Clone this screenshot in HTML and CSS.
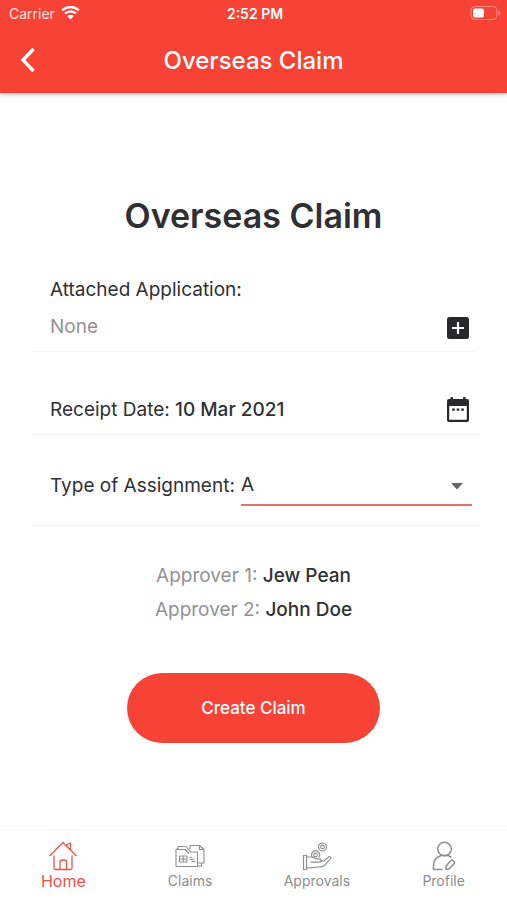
FILE: index.html
```html
<!DOCTYPE html>
<html lang="en">
<head>
<meta charset="utf-8">
<meta name="viewport" content="width=device-width, initial-scale=1">
<title>Overseas Claim</title>
<link rel="stylesheet" href="styles.css">
</head>
<body>
<header class="top">
  <div class="status">
    <span class="carrier">Carrier
      <svg width="19" height="15" viewBox="0 0 19 15" fill="none" stroke="#fff" stroke-width="2.4" aria-hidden="true"><path d="M1.2 4.300a12 12 0 0 1 16.600 0M4.100 7.500a7.800 7.800 0 0 1 10.800 0"/><path d="M6.300 10.100a4.600 4.600 0 0 1 6.400 0L9.500 13.400z" fill="#fff" stroke="none"/></svg>
    </span>
    <span class="time">2:52 PM</span>
    <span class="battery">
      <svg width="31" height="15" viewBox="0 0 31 15" aria-hidden="true"><rect x="1" y=".5" width="26" height="13" rx="4" fill="none" stroke="#fff" stroke-opacity=".4"/><rect x="3" y="2.500" width="11" height="9" rx="2" fill="#fff"/><path d="M28.500 4.500q2 1 2 2.500t-2 2.500z" fill="#fff" fill-opacity=".4"/></svg>
    </span>
  </div>
  <div class="bar">
    <button class="icon-button back" type="button" aria-label="Back">
      <svg width="16" height="26" viewBox="0 0 16 26" fill="none" stroke="#fff" stroke-width="3.400" aria-hidden="true"><path d="M13.500 2 3 13l10.500 11"/></svg>
    </button>
    <span class="bar-title">Overseas Claim</span>
  </div>
</header>

<main class="content">
  <h1>Overseas Claim</h1>
  <form class="form">
    <section class="row attachment">
      <div>
        <p class="label">Attached Application:</p>
        <p class="empty">None</p>
      </div>
      <button class="icon-button" type="button" aria-label="Attach application">
        <svg width="24" height="24" viewBox="0 0 24 24" aria-hidden="true"><rect x="1" y="1" width="22" height="22" rx="2.500" fill="#29292b"/><path d="M12 6v12M6 12h12" stroke="#fff" stroke-width="2.200"/></svg>
      </button>
    </section>
    <section class="row date">
      <p class="label">Receipt Date: <strong>10 Mar 2021</strong></p>
      <button class="icon-button" type="button" aria-label="Choose receipt date">
        <svg width="24" height="26" viewBox="0 0 24 26" aria-hidden="true"><path fill="#29292b" fill-rule="evenodd" d="M4.500 0h2.400v2h10.200V0h2.400v2H21q2 0 2 2v19q0 2-2 2H3q-2 0-2-2V4q0-2 2-2h1.500zM3.200 9v13.800h17.600V9z"/><path d="M6.200 12.700h2.600M10.700 12.700h2.600M15.200 12.700h2.600" stroke="#29292b" stroke-width="2.200"/></svg>
      </button>
    </section>
    <section class="row assignment">
      <label class="label" for="type">Type of Assignment:</label>
      <div class="select">
        <select id="type"><option>A</option><option>B</option></select>
        <svg width="14" height="7" viewBox="0 0 14 7" aria-hidden="true"><path d="M1 0h12L7 6.500z" fill="#666"/></svg>
      </div>
    </section>
    <div class="approvers">
      <p>Approver 1: <strong>Jew Pean</strong></p>
      <p>Approver 2: <strong>John Doe</strong></p>
    </div>
    <button class="submit" type="button">Create Claim</button>
  </form>
</main>

<nav class="tabs">
  <a class="tab active" href="#home">
    <svg width="30" height="30" viewBox="0 0 30 30" fill="none" stroke="currentColor" stroke-width="1.300" stroke-linejoin="round" stroke-linecap="round" aria-hidden="true"><path d="M2 14.500 15 1.500l13 13M6 15v12q0 1.500 1.500 1.500h15q1.500 0 1.500-1.500V15M12 28v-7q0-2 2-2h2.500q2 0 2 2v7M18.800 5.200V3.500L22.500 2v6.800"/></svg>
    <span>Home</span>
  </a>
  <a class="tab" href="#claims">
    <svg width="30" height="30" viewBox="0 0 30 30" fill="none" stroke="currentColor" stroke-width="1.100" stroke-linejoin="round" aria-hidden="true"><path d="M1 25.500V8.500l2-1V5.500h8l4.500 5.500h7v14.500zM2 8.500h8l4 4M15 8.500v-4h9.500l4.500 4V22h-6M24.500 4.500v4H29M23 25h3.500v-3"/><path d="M4.500 15h7.500v6H4.500zM4.500 18h7.500M8.200 15v6M14.500 16.500h3M14.500 18.500h5M16.500 20.500h4" stroke-width="1"/></svg>
    <span>Claims</span>
  </a>
  <a class="tab" href="#approvals">
    <svg width="30" height="30" viewBox="0 0 30 30" fill="none" stroke="currentColor" stroke-width="1.200" stroke-linejoin="round" stroke-linecap="round" aria-hidden="true"><path d="M1.500 14.500h3v14h-3zM4.500 16h5.500q2 0 4 1.800h3q2 0 2 1.700t-2 1.700H9M18.800 20.500l3.200-.7 5-4q1.500-.6 1.800.8-.5 2-6.300 7.600-2.500 1.800-5 1.800l-8 .7-5 .3"/><circle cx="20.500" cy="6" r="4"/><circle cx="20.500" cy="6" r="1.800"/><path d="M10.200 16a4 4 0 1 1 6.800 0"/><circle cx="13.500" cy="14" r="1.800"/></svg>
    <span>Approvals</span>
  </a>
  <a class="tab" href="#profile">
    <svg width="30" height="30" viewBox="0 0 30 30" fill="none" stroke="currentColor" stroke-width="1.500" stroke-linejoin="round" stroke-linecap="round" aria-hidden="true"><circle cx="15.500" cy="8" r="6.800"/><path d="M12 14.500q-7.500 2.500-7.500 10.500v3.500H13M12 14.500h7l3 1.500M17 25l5-5.500q1-1 2 0l1.200 1.200q1 1 0 2L20 28l-3 .5z"/></svg>
    <span>Profile</span>
  </a>
</nav>
</body>
</html>
```

FILE: styles.css
```css
* {
  box-sizing: border-box;
}

body {
  margin: 0;
  min-height: 100vh;
  display: flex;
  flex-direction: column;
  background: #fff;
  color: #303032;
  font-family: Inter, "Liberation Sans", sans-serif;
}

h1,
p {
  margin: 0;
}

button {
  border: 0;
  font: inherit;
  cursor: pointer;
}

svg {
  display: block;
}

.top {
  background: #f64336;
  color: #fff;
  box-shadow: 0 1px 5px rgba(0, 0, 0, 0.3);
}

.status {
  display: grid;
  grid-template-columns: 1fr auto 1fr;
  align-items: center;
  height: 27px;
  padding: 0 6px 0 9px;
  font-size: 14px;
}

.carrier {
  display: flex;
  align-items: center;
  gap: 6px;
  color: #ffe3e0;
}

.time {
  font-weight: 600;
}

.battery {
  justify-self: end;
}

.bar {
  display: grid;
  grid-template-columns: 56px 1fr 56px;
  align-items: center;
  height: 66px;
}

.icon-button {
  padding: 0;
  background: none;
}

.back {
  justify-self: start;
  margin-left: 20px;
}

.bar-title {
  font-size: 24px;
  font-weight: 500;
  text-align: center;
}

.content {
  flex: 1;
  padding: 101px 32px 40px;
}

h1 {
  font-size: 34px;
  font-weight: 600;
  line-height: 44px;
  text-align: center;
}

.form {
  font-size: 19px;
  line-height: 26px;
}

.row {
  display: flex;
  align-items: center;
  justify-content: space-between;
  margin-right: -5px;
  padding: 0 10px 0 18px;
  border-bottom: 1px solid #f3f3f3;
}

.attachment {
  align-items: flex-end;
  margin-top: 39px;
  margin-right: 0;
  padding-right: 5px;
  padding-bottom: 11px;
}

.empty {
  margin-top: 11px;
  color: #929292;
}

.date {
  height: 83px;
  padding-top: 34px;
}

strong {
  font-weight: 500;
}

.assignment {
  gap: 6px;
  height: 91px;
  padding: 12px 8px 0 18px;
}

.select {
  position: relative;
  flex: 1;
  display: flex;
}

.select select {
  width: 100%;
  height: 40px;
  padding: 0;
  appearance: none;
  border: 0;
  border-bottom: 2px solid #e57368;
  border-radius: 0;
  background: none;
  color: inherit;
  font: inherit;
}

.select svg {
  position: absolute;
  top: 17px;
  right: 8px;
  pointer-events: none;
}

.approvers {
  display: grid;
  gap: 8px;
  margin-top: 37px;
  color: #929292;
  text-align: center;
}

.approvers strong {
  color: #303032;
}

.submit {
  display: block;
  width: 57%;
  min-height: 70px;
  margin: 50px auto 0;
  border-radius: 35px;
  background: #f64336;
  color: #fff;
  font-size: 17px;
  font-weight: 500;
}

.tabs {
  display: grid;
  grid-template-columns: repeat(4, 1fr);
  height: 71px;
  border-top: 1px solid #f7f7f7;
}

.tab {
  display: flex;
  flex-direction: column;
  align-items: center;
  padding-top: 11px;
  color: #8e8e8e;
  font-size: 14px;
  line-height: 20px;
  text-decoration: none;
}

.active {
  color: #ee5147;
  font-size: 16px;
}
```
